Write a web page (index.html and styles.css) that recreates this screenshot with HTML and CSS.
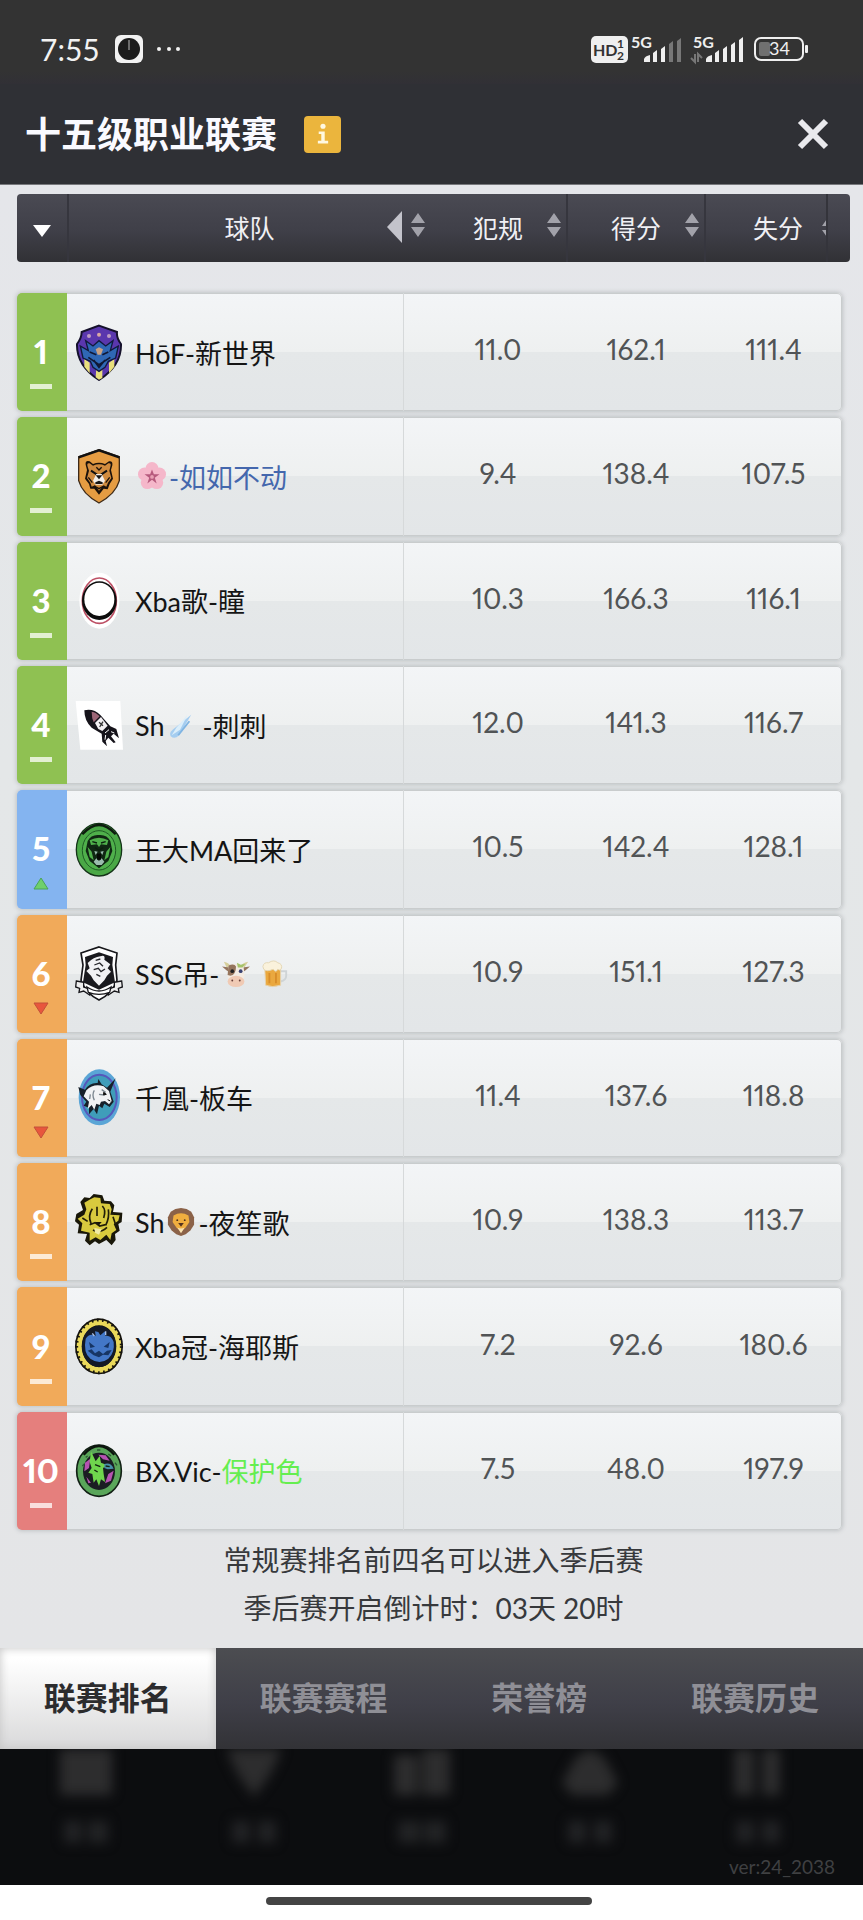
FILE: index.html
```html
<!DOCTYPE html>
<html lang="zh-CN">
<head>
    <meta charset="UTF-8">
    <meta name="viewport" content="width=device-width, initial-scale=1.0">
    <title>十五级职业联赛</title>
    <link rel="stylesheet" href="styles.css">
</head>
<body>

    <svg class="defs" aria-hidden="true">
        <symbol id="sort" viewBox="0 0 14 24">
            <path d="M7 0L14 10H0zM0 14H14L7 24z" fill="#a2a2aa"/>
        </symbol>
    </svg>

    <div class="status-bar">
        <span class="time">7:55</span>
        <svg width="28" height="28" viewBox="0 0 28 28" aria-hidden="true">
            <rect width="28" height="28" rx="6" fill="#f2f2f2"/>
            <circle cx="14" cy="14" r="11" fill="#1c1c1c"/>
            <path d="M14 5V15" stroke="#bbb" stroke-width="1"/>
        </svg>
        <svg class="dots" width="26" height="6" viewBox="0 0 26 6" fill="#f2f2f2" aria-hidden="true">
            <circle cx="3" cy="3" r="2"/><circle cx="13" cy="3" r="2"/><circle cx="22" cy="3" r="2"/>
        </svg>
        <svg class="signals" width="218" height="40" viewBox="0 -6 218 40" fill="#efefef" aria-hidden="true">
            <rect y="1" width="37" height="27" rx="5"/>
            <g class="hd">
                <text x="2" y="21" font-size="16">HD</text>
                <text x="26" y="13" font-size="12">1</text>
                <text x="26" y="25" font-size="12">2</text>
            </g>
            <text class="net" x="40" y="13">5G</text>
            <path d="M53 27v-3q1-3 6-4v7zM62 27V18l4-3V27zM70 27V14l4-3V27z"/>
            <path d="M78 27V9l4-3V27zM86 27V6l4-3V27z" fill="#777"/>
            <text class="net" x="102" y="13">5G</text>
            <path d="M104 19v8l-4-4M107 27v-8l4 4" fill="none" stroke="#777" stroke-width="2"/>
            <path d="M115 27v-3q1-3 6-4v7zM124 27V18l4-3V27zM132 27V14l4-3V27zM140 27V10l4-3V27zM148 27V5l4-3V27z"/>
            <rect x="164" y="3" width="48" height="22" rx="6" fill="none" stroke="#efefef" stroke-width="2"/>
            <rect x="168" y="7" width="11" height="14" rx="2" fill="#707070"/>
            <text x="178" y="20" font-size="18">34</text>
            <rect x="214" y="10" width="3" height="8" rx="1"/>
        </svg>
    </div>

    <header class="title-bar">
        <h1>十五级职业联赛</h1>
        <button class="info" aria-label="说明">
            <svg width="12" height="22" viewBox="0 0 14 24" fill="#fff8e0" aria-hidden="true">
                <circle cx="7" cy="3" r="3"/>
                <path d="M2 9H9V20H13V23H1V20H5V12H2z"/>
            </svg>
        </button>
        <button class="close" aria-label="关闭">
            <svg width="32" height="32" viewBox="0 0 32 32" aria-hidden="true">
                <path d="M3 3L29 29M29 3L3 29" stroke="#e9e9ed" stroke-width="6"/>
            </svg>
        </button>
    </header>

    <main>
        <table>
            <thead>
                <tr>
                    <th><button aria-label="排名"><svg width="18" height="12" viewBox="0 0 18 12"><path d="M0 0H18L9 12z" fill="#fff"/></svg></button></th>
                    <th>
                        <button>球队</button>
                        <svg class="back" width="15" height="32" viewBox="0 0 15 32" aria-hidden="true"><path d="M15 0V32L0 16z" fill="#c3c3cb"/></svg>
                        <svg class="sort"><use href="#sort"/></svg>
                    </th>
                    <th><button>犯规</button><svg class="sort"><use href="#sort"/></svg></th>
                    <th><button>得分</button><svg class="sort"><use href="#sort"/></svg></th>
                    <th><button>失分</button><span class="cut"><svg width="14" height="24"><use href="#sort"/></svg></span></th>
                </tr>
            </thead>
            <tbody>
                <tr>
                    <td class="rank green">1<i class="same"></i></td>
                    <td class="team">
                        <svg class="crest" viewBox="0 0 144 171">
                            <path d="M72 5L126 24Q124 42 138 60Q140 124 72 168Q4 124 6 60Q20 42 20 24z" fill="#5a37ad" stroke="#15112b" stroke-width="6"/>
                            <path d="M28 104L44 116V148L28 128zM64 130L72 138L82 130V162L72 167L62 160zM118 104L102 116V148L118 128z" fill="#e9df7c"/>
                            <path d="M16 66L40 80L32 50L54 66L72 50L92 66L114 50L106 80L130 66L122 102L100 112L90 130L72 142L54 130L46 112L24 102z" fill="#2f67b5" stroke="#111a3c" stroke-width="4"/>
                            <path d="M44 84L64 92M100 84L82 92M40 100L72 122L106 100M56 108L72 130L90 108" stroke="#101836" stroke-width="5" fill="none"/>
                            <path d="M62 76L72 70L84 76L78 92H68z" fill="#c9a183"/>
                            <circle cx="42" cy="36" r="6" fill="#bd9cc2"/><circle cx="72" cy="32" r="6" fill="#d8a9a4"/><circle cx="102" cy="36" r="6" fill="#bd9cc2"/>
                        </svg>
                        <span>HōF-新世界</span>
                    </td>
                    <td>11.0</td><td>162.1</td><td>111.4</td>
                </tr>
                <tr>
                    <td class="rank green">2<i class="same"></i></td>
                    <td class="team">
                        <svg class="crest" viewBox="0 0 144 171">
                            <path d="M72 5L133 26V98Q122 138 72 165Q22 138 11 98V26z" fill="#e59c42" stroke="#3d2a18" stroke-width="4"/>
                            <path d="M11 28L72 7L133 28" stroke="#111" stroke-width="7" fill="none"/>
                            <path d="M32 50Q30 36 44 40L54 48Q72 40 90 48L102 40Q114 38 112 52L108 66L114 92L104 108L98 124L86 122L72 140L58 122L46 122L42 108L30 92L36 66z" fill="#1b120b"/>
                            <path d="M38 56Q34 44 44 46L54 53Q72 45 90 53L100 46Q110 44 106 56L103 68L109 90L99 104L94 116L86 112L72 128L60 112L50 116L46 104L36 90L42 68z" fill="#d18c3f"/>
                            <path d="M48 68L66 80M96 68L78 80" stroke="#111" stroke-width="6"/>
                            <path d="M64 58L72 66L80 58M40 88L52 104M104 88L92 104M58 114L72 122L86 114" stroke="#1b120b" stroke-width="4" fill="none"/>
                            <path d="M64 78H80L90 98L82 110H62L54 98z" fill="#f4efe9"/>
                            <path d="M62 82H82L72 94zM61 103L72 98L83 103V108H61z" fill="#171717"/>
                        </svg>
                        <svg class="emoji" viewBox="0 0 30 30" role="img" aria-label="🌸">
                            <g fill="#f5b7ca"><circle cx="15" cy="7" r="7"/><circle cx="23" cy="13" r="7"/><circle cx="20" cy="22" r="7"/><circle cx="10" cy="22" r="7"/><circle cx="7" cy="13" r="7"/></g>
                            <path d="M15 8L17 13L23 13L18 17L20 23L15 19L10 23L12 17L7 13L13 13z" fill="#b65a7d"/>
                            <circle cx="15" cy="16" r="2" fill="#e9a0b4"/>
                        </svg>
                        <span class="blue">-如如不动</span>
                    </td>
                    <td>9.4</td><td>138.4</td><td>107.5</td>
                </tr>
                <tr>
                    <td class="rank green">3<i class="same"></i></td>
                    <td class="team">
                        <svg class="crest" viewBox="0 0 144 171">
                            <ellipse cx="73" cy="86" rx="60" ry="84" fill="#fff"/>
                            <ellipse cx="73" cy="86" rx="51" ry="68" fill="#fff" stroke="#bd5065" stroke-width="5"/>
                            <ellipse cx="73" cy="86" rx="52" ry="58" fill="#0d0d0d"/>
                            <ellipse cx="73" cy="82" rx="45" ry="50" fill="#fff"/>
                        </svg>
                        <span>Xba歌-瞳</span>
                    </td>
                    <td>10.3</td><td>166.3</td><td>116.1</td>
                </tr>
                <tr>
                    <td class="rank green">4<i class="same"></i></td>
                    <td class="team">
                        <svg class="crest" viewBox="0 0 144 171">
                            <path d="M2 12H136L144 158H16z" fill="#fff"/>
                            <path d="M28 40Q56 34 76 54L106 88L124 96L132 124L116 110L108 118L122 136L116 138L100 122L92 132L96 148L82 134L80 110L50 92Q28 72 28 40z" fill="#15131a"/>
                            <path d="M50 44Q64 46 74 58L56 76Q50 64 50 44z" fill="#9c6677"/>
                            <path d="M60 78L78 60L98 86L82 102L70 96z" fill="#f3f0f3"/>
                            <path d="M72 76L84 86M84 74L74 90" stroke="#333" stroke-width="4"/>
                            <path d="M90 108L102 98M92 114L90 128M108 104L118 108" stroke="#fff" stroke-width="3"/>
                        </svg>
                        <span>Sh</span>
                        <svg class="emoji" viewBox="0 0 30 30" role="img" aria-label="☄️">
                            <path d="M26 4L13 26Q8 31 4 27Q2 23 6 20z" fill="#a5cdf0"/>
                            <path d="M22 4L10 18L5 26L14 20z" fill="#dbeefa"/>
                            <path d="M24 11L12 26" stroke="#7fb4e2" stroke-width="2"/>
                        </svg>
                        <span class="spaced">-刺刺</span>
                    </td>
                    <td>12.0</td><td>141.3</td><td>116.7</td>
                </tr>
                <tr>
                    <td class="rank sky">5<svg class="move" viewBox="0 0 16 13"><path d="M8 1L15 12H1z" fill="#6fd06c" stroke="#4aa359" stroke-width="1"/></svg></td>
                    <td class="team">
                        <svg class="crest" viewBox="0 0 144 171">
                            <ellipse cx="72" cy="86" rx="68" ry="79" fill="#4aa846" stroke="#143318" stroke-width="4"/>
                            <path d="M22 40Q72-16 122 40" stroke="#0d1c0e" stroke-width="7" fill="none"/>
                            <ellipse cx="72" cy="88" rx="50" ry="59" fill="#4fb04b" stroke="#1f5a25" stroke-width="3"/>
                            <path d="M38 60Q48 40 72 42Q96 40 106 60L112 90L100 120L72 142L44 120L32 90z" fill="#102713"/>
                            <path d="M44 58Q72 42 100 58L96 72L78 70L72 78L66 70L48 72zM38 78L50 92L56 118L44 108zM106 78L94 92L88 118L100 108z" fill="#4fb04b"/>
                            <path d="M52 62L66 66M92 62L78 66M60 80L72 88L84 80" stroke="#0c1f0e" stroke-width="4" fill="none"/>
                            <path d="M58 90L62 102L68 92M86 90L82 102L76 92M56 122L64 112L72 120L80 112L88 122L80 132H64z" fill="#9bbcae"/>
                            <path d="M66 98H78V116H66z" fill="#050805"/>
                        </svg>
                        <span>王大MA回来了</span>
                    </td>
                    <td>10.5</td><td>142.4</td><td>128.1</td>
                </tr>
                <tr>
                    <td class="rank orange">6<svg class="move" viewBox="0 0 16 13"><path d="M1 1H15L8 12z" fill="#e8563d" stroke="#c2513a" stroke-width="1"/></svg></td>
                    <td class="team">
                        <svg class="crest" viewBox="0 0 144 171">
                            <path d="M72 6L126 24L122 60L126 106Q112 146 72 165Q32 146 18 106L24 60L18 24z" fill="#fff" stroke="#16161a" stroke-width="5"/>
                            <path d="M72 22L114 36L112 60L120 112L72 134L24 112L32 60L30 36z" fill="#1a1a1e"/>
                            <path d="M38 54Q56 36 76 34Q92 28 88 44L106 58L98 70L108 80L96 92L88 106L72 122L56 106L48 92L34 78L44 70z" fill="#f2f2f4"/>
                            <path d="M58 60L74 54L84 64M56 74L70 70L78 80L90 72M64 88L76 94M62 46L76 42" stroke="#25252a" stroke-width="4" fill="none"/>
                            <path d="M4 108L26 112V126L44 132V150L26 138L12 142L14 130L2 126zM140 108L118 112V126L100 132V150L118 138L132 142L130 130L142 126z" fill="#eee" stroke="#16161a" stroke-width="4"/>
                            <path d="M36 126Q72 150 108 126L104 142Q72 154 40 142z" fill="#fff" stroke="#16161a" stroke-width="4"/>
                        </svg>
                        <span>SSC吊-</span>
                        <svg class="emoji" viewBox="0 0 30 30" role="img" aria-label="🐮">
                            <path d="M5 8L2 2Q8 3 9 7M24 8L28 2Q21 3 21 7" fill="#d6cf9b"/>
                            <path d="M0 7L8 8L6 12zM30 7L22 8L24 12z" fill="#94755e"/>
                            <path d="M7 6Q15 2 23 6L24 18L20 26H10L6 18z" fill="#f3ebe2"/>
                            <path d="M7 6Q13 3 15 7Q15 16 9 17L6 16z" fill="#95755d"/>
                            <ellipse cx="15" cy="23" rx="9" ry="6" fill="#f0cab4"/>
                            <path d="M16 3L20 5L25 4L22 8H17z" fill="#a5c36a"/>
                            <circle cx="11" cy="12" r="2" fill="#222"/><circle cx="20" cy="12" r="2" fill="#384272"/>
                            <circle cx="11" cy="22" r="1" fill="#683f38"/><circle cx="19" cy="22" r="1" fill="#683f38"/>
                        </svg>
                        <svg class="emoji beer" viewBox="0 0 30 30" role="img" aria-label="🍺">
                            <path d="M21 12H27V17Q27 22 21 23" fill="none" stroke="#cfd4d6" stroke-width="2"/>
                            <path d="M4 8H21V27Q12 30 5 27z" fill="#eaa83f" stroke="#e6d3ae" stroke-width="1"/>
                            <path d="M9 14V25M16 14V25" stroke="#d88d2a" stroke-width="2"/>
                            <path d="M2 7Q3 2 8 3Q14-1 18 3Q23 4 22 9Q20 12 18 10Q16 14 13 10Q6 13 3 10z" fill="#faf2dc" stroke="#e3d6b4" stroke-width="1"/>
                        </svg>
                    </td>
                    <td>10.9</td><td>151.1</td><td>127.3</td>
                </tr>
                <tr>
                    <td class="rank orange">7<svg class="move" viewBox="0 0 16 13"><path d="M1 1H15L8 12z" fill="#e8563d" stroke="#c2513a" stroke-width="1"/></svg></td>
                    <td class="team">
                        <svg class="crest" viewBox="0 0 144 171">
                            <ellipse cx="73" cy="85" rx="62" ry="84" fill="#5aa5d6"/>
                            <ellipse cx="73" cy="85" rx="52" ry="68" fill="#3f9dba" stroke="#5658bb" stroke-width="6"/>
                            <path d="M96 56L122 28L106 68L116 98L104 114L88 104L82 118L72 110L66 136L56 120L42 136V116L26 110L34 98L16 78L10 54L30 62Q44 40 68 42L70 30L80 46z" fill="#17202a"/>
                            <path d="M34 64Q56 42 86 52L102 66L110 96L102 106L90 96L78 98L74 108L64 104L58 122L50 108L38 120L42 98L26 82z" fill="#f1f2f4"/>
                            <path d="M58 64Q50 76 58 94M72 76L88 78M80 62L92 70M46 76L44 90" stroke="#7c8790" stroke-width="4" fill="none"/>
                            <path d="M86 70L94 76L86 78zM98 92L106 96" stroke="#111" stroke-width="3"/>
                        </svg>
                        <span>千凰-板车</span>
                    </td>
                    <td>11.4</td><td>137.6</td><td>118.8</td>
                </tr>
                <tr>
                    <td class="rank orange">8<i class="same"></i></td>
                    <td class="team">
                        <svg class="crest" viewBox="0 0 144 171">
                            <path d="M16 24L28 10L44 12L56 0L82 4L88 20L108 22L118 34L114 54L142 56L140 84L130 90L134 110L120 120L122 138L110 154L94 138L72 150L60 142L44 154L30 140L36 120L8 118L12 92L0 82L4 60L24 48z" fill="#191709"/>
                            <path d="M28 26L46 16L58 10L76 12L78 28L104 30L110 46L106 62L134 64L130 80L116 90L124 108L110 118L106 138L94 122L76 138L62 130L44 140L44 116L18 110L22 88L8 74L28 62L34 46z" fill="#d8ca3e"/>
                            <path d="M52 44Q38 64 48 88M66 38V66M82 36Q94 48 86 72M100 46Q104 70 92 94M44 92L60 86L74 96L92 92M54 108Q74 120 96 100M22 72L38 82M114 68L122 92" stroke="#211e09" stroke-width="5" fill="none"/>
                            <path d="M58 102L80 106L72 122L60 116z" fill="#f0eaa4"/>
                            <path d="M60 84H80L72 94z" fill="#171509"/>
                        </svg>
                        <span>Sh</span>
                        <svg class="emoji" viewBox="0 0 30 30" role="img" aria-label="🦁">
                            <path d="M15 0L21 1L26 4L29 10L29 18L25 24L20 28L15 30L10 28L5 24L1 18L1 10L4 4L9 1z" fill="#8b6248"/>
                            <path d="M7 8Q15 3 23 8L24 15L20 21L15 25L10 21L6 15z" fill="#f0ae3f"/>
                            <circle cx="11" cy="13" r="1" fill="#4c2f1b"/><circle cx="19" cy="13" r="1" fill="#4c2f1b"/>
                            <path d="M12 16H18L15 20z" fill="#53321f"/>
                            <path d="M11 21Q15 23 19 21L15 27z" fill="#fae3b1"/>
                        </svg>
                        <span>-夜笙歌</span>
                    </td>
                    <td>10.9</td><td>138.3</td><td>113.7</td>
                </tr>
                <tr>
                    <td class="rank orange">9<i class="same"></i></td>
                    <td class="team">
                        <svg class="crest" viewBox="0 0 144 171">
                            <ellipse cx="72" cy="85" rx="72" ry="84" fill="#15130d"/>
                            <ellipse cx="72" cy="85" rx="59" ry="71" fill="none" stroke="#ead95a" stroke-width="16"/>
                            <ellipse cx="72" cy="85" rx="67" ry="79" fill="none" stroke="#15130d" stroke-width="9" stroke-dasharray="5 11"/>
                            <ellipse cx="72" cy="85" rx="52" ry="62" fill="#141925"/>
                            <path d="M32 62Q44 44 62 54L60 40L70 42L76 52L90 40V54Q108 50 116 72Q120 104 100 122Q74 142 46 122Q24 104 32 62z" fill="#4377c7"/>
                            <path d="M42 72L60 86L46 90zM104 72L86 86L100 90zM38 98L50 94L60 106L72 98L84 108L96 98L110 96L100 112L84 110L72 118L56 112z" fill="#173564"/>
                            <path d="M52 46L58 54M92 40V52" stroke="#a9bee5" stroke-width="4"/>
                        </svg>
                        <span>Xba冠-海耶斯</span>
                    </td>
                    <td>7.2</td><td>92.6</td><td>180.6</td>
                </tr>
                <tr>
                    <td class="rank red">10<i class="same"></i></td>
                    <td class="team">
                        <svg class="crest" viewBox="0 0 144 171">
                            <ellipse cx="72" cy="86" rx="67" ry="77" fill="#5aa65a" stroke="#122015" stroke-width="5"/>
                            <path d="M26 38Q72-14 118 38" stroke="#0c140d" stroke-width="7" fill="none"/>
                            <ellipse cx="72" cy="88" rx="48" ry="56" fill="#1a1d22"/>
                            <path d="M30 62L46 50L42 78L28 88zM70 38L92 40L104 56L84 52zM100 96L116 86L108 116L90 124zM34 104L48 122L40 124z" fill="#b653b1"/>
                            <path d="M48 28L62 58L74 42L78 62L98 70L84 78L86 96L90 120L78 112L72 132L64 112L56 122L52 96L40 92L50 78L44 60z" fill="#6fd54d"/>
                            <path d="M88 66Q108 60 116 80L98 82L88 78z" fill="#4690a8"/>
                            <path d="M60 68L76 74M58 84L68 90M92 72L104 74" stroke="#12240e" stroke-width="4"/>
                            <path d="M22 72L28 66M32 46L38 42M66 24H76M100 36L108 42M120 62L126 70" stroke="#2b5b32" stroke-width="4"/>
                        </svg>
                        <span>BX.Vic-<b class="lime">保护色</b></span>
                    </td>
                    <td>7.5</td><td>48.0</td><td>197.9</td>
                </tr>
            </tbody>
        </table>

        <p>常规赛排名前四名可以进入季后赛</p>
        <p>季后赛开启倒计时：03天 20时</p>
    </main>

    <nav class="tabs">
        <button class="active">联赛排名</button>
        <button>联赛赛程</button>
        <button>荣誉榜</button>
        <button>联赛历史</button>
    </nav>

    <!-- dimmed main menu behind the dialog -->
    <footer>
        <div class="menu" aria-hidden="true">
            <svg viewBox="0 0 60 110"><path d="M4 0H56V46H4z"/><path class="label" d="M8 72H26V94H8zM32 72H52V94H32z"/></svg>
            <svg viewBox="0 0 60 110"><path d="M2 0H58L46 26L30 48L14 26z"/><path class="label" d="M8 72H26V94H8zM34 72H52V94H34z"/></svg>
            <svg viewBox="0 0 60 110"><path d="M2 6H26V46H2zM30 0H58V46H30z"/><path class="label" d="M6 72H28V94H6zM32 72H54V94H32z"/></svg>
            <svg viewBox="0 0 60 110"><path d="M30 0L44 8L58 34L48 46H12L2 34L16 8z"/><path class="label" d="M8 72H26V94H8zM34 72H52V94H34z"/></svg>
            <svg viewBox="0 0 60 110"><path d="M6 0H26V46H6zM34 0H52V46H34z"/><path class="label" d="M8 72H26V94H8zM34 72H52V94H34z"/></svg>
        </div>
        <small>ver:24_2038</small>
    </footer>

    <div class="home"><span></span></div>

</body>
</html>
```

FILE: styles.css
```css
* {
    box-sizing: border-box;
}

body {
    margin: 0;
    min-height: 100vh;
    display: flex;
    flex-direction: column;
    font-family: Lato, "Noto Sans CJK SC", sans-serif;
    background-color: #fff;
}

button {
    border: none;
    padding: 0;
    background: none;
    color: inherit;
    font: inherit;
    cursor: pointer;
}

svg {
    flex: none;
}

.defs {
    position: absolute;
    width: 0;
    height: 0;
}

/* status bar */
.status-bar {
    display: flex;
    align-items: center;
    height: 84px;
    padding: 14px 54px 0 40px;
    background: linear-gradient(#333 85%, #313036);
    color: #f2f2f2;
}

.time {
    width: 75px;
    font-size: 30px;
}

.dots {
    margin-left: 13px;
}

.signals {
    margin-left: auto;
}

.hd {
    fill: #333;
    font-weight: bold;
}

.net {
    font-size: 16px;
    font-weight: bold;
}

/* title */
.title-bar {
    display: flex;
    align-items: center;
    height: 101px;
    padding: 0 34px 0 25px;
    border-bottom: 1px solid #77787c;
    background-color: #2f3035;
    color: #fafaff;
}

h1 {
    margin: 0;
    font-size: 36px;
    line-height: 50px;
    font-weight: bold;
}

.info {
    display: flex;
    align-items: center;
    justify-content: center;
    width: 37px;
    height: 37px;
    margin-left: 27px;
    border-radius: 4px;
    background-color: #ebb53d;
}

.close {
    display: flex;
    margin-left: auto;
}

/* table */
main {
    flex: 1;
    display: flex;
    flex-direction: column;
    padding: 9px 13px 16px 17px;
    background: linear-gradient(#e5e6ea, #e4e7e8 40%, #e4e5e7);
}

table {
    flex: 1;
    display: flex;
    flex-direction: column;
    gap: 31px;
}

thead {
    display: block;
    height: 68px;
    border-radius: 4px;
    background: linear-gradient(#4a4a53, #3f3f48 55%, #313135);
    color: #f0f0f4;
    overflow: hidden;
}

tr {
    display: grid;
    grid-template-columns: 50px 1fr 138px 138px 137px;
}

thead tr {
    height: 100%;
    grid-template-columns: 52px 1fr 138px 138px 144px;
}

th {
    position: relative;
    display: flex;
    align-items: center;
    justify-content: center;
    padding: 0 0 2px;
    font-size: 25px;
    font-weight: normal;
}

th:nth-child(1),
th:nth-child(3),
th:nth-child(4) {
    border-right: 2px solid #36363e;
}

.sort {
    position: absolute;
    right: 5px;
    top: 19px;
    width: 14px;
    height: 24px;
}

.back {
    position: absolute;
    right: 28px;
    top: 17px;
}

.cut {
    position: absolute;
    right: 22px;
    top: 0;
    display: flex;
    align-items: center;
    width: 6px;
    height: 100%;
    border-right: 2px solid #34343b;
    overflow: hidden;
}

tbody {
    flex: 1;
    display: grid;
    grid-auto-rows: 1fr;
    gap: 6px;
    margin-right: 8px;
}

tbody tr {
    border-radius: 5px;
    background: linear-gradient(#f3f5f7, #eef0f0 50%, #e5e8e9 50%, #e3e6e8);
    box-shadow: inset 0 0 0 1px #c9cccd, 0 0 4px 1px #bfc3c5;
}

td {
    display: flex;
    align-items: center;
    justify-content: center;
    padding: 0 0 6px;
    font-size: 28px;
    font-variant-numeric: proportional-nums;
    color: #515456;
}

.rank {
    flex-direction: column;
    gap: 9px;
    padding: 20px 2px 0 0;
    border-radius: 5px 0 0 5px;
    font-size: 33px;
    line-height: 40px;
    font-weight: 900;
    color: #fff;
}

.green {
    background-color: #8fc152;
}

.sky {
    background-color: #84b4f0;
}

.orange {
    background-color: #f1aa5a;
}

.red {
    background-color: #e57f7d;
}

.same {
    width: 22px;
    height: 5px;
    margin: 4px 0;
    background-color: #fff;
    opacity: 0.75;
}

.move {
    width: 16px;
    height: 13px;
}

.team {
    justify-content: flex-start;
    margin-right: 25px;
    padding: 0 0 0 8px;
    border-right: 1px solid #d6d9da;
    font-size: 27px;
    color: #151515;
    white-space: pre;
}

.crest {
    width: 48px;
    height: 57px;
    margin-right: 12px;
}

.emoji {
    width: 28px;
    height: 28px;
    margin: 0 3px;
}

.beer {
    margin-left: 8px;
}

.spaced {
    margin-left: 4px;
}

.blue {
    color: #4467ad;
}

.lime {
    font-weight: normal;
    color: #65ee50;
}

p {
    margin: 0;
    font-size: 28px;
    line-height: 48px;
    text-align: center;
    color: #37393c;
}

p:first-of-type {
    margin-top: 6px;
}

/* tabs */
.tabs {
    display: grid;
    grid-template-columns: repeat(4, 1fr);
    height: 101px;
    background: linear-gradient(#4c4d51, #3f3f48 55%, #323236);
}

.tabs button {
    padding-bottom: 6px;
    font-size: 32px;
    font-weight: bold;
    color: #8f8f96;
}

.tabs .active {
    background: linear-gradient(#fff 10%, #f3f3f3 40%, #d9d9da);
    box-shadow: inset 0 0 10px #c4c4c4;
    color: #2c2c2e;
}

/* menu */
footer {
    height: 136px;
    padding: 0 28px;
    background-color: #0c0d0f;
    overflow: hidden;
}

.menu {
    display: flex;
    justify-content: space-between;
    height: 106px;
    padding: 0 47px 0 28px;
    fill: #2d2d2e;
    filter: blur(6px);
}

.menu svg {
    width: 60px;
    height: 110px;
}

.label {
    fill: #222325;
}

small {
    display: block;
    font-size: 19px;
    line-height: 24px;
    text-align: right;
    color: #3f4042;
}

.home {
    display: flex;
    justify-content: center;
    height: 35px;
    padding: 12px 5px 0 0;
}

.home span {
    width: 38%;
    height: 8px;
    border-radius: 4px;
    background-color: #444;
}
```
